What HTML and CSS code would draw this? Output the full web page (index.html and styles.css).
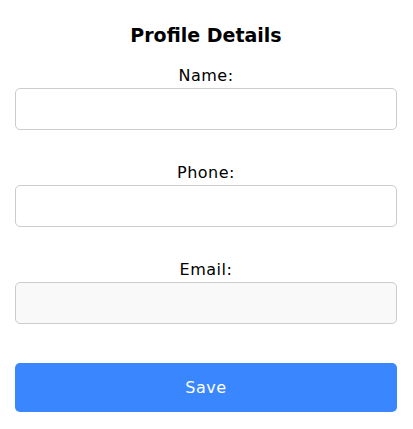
FILE: index.html
```html
<!DOCTYPE html>
<html lang="en">
<head>
<meta charset="utf-8">
<title>Profile Details</title>
<link rel="stylesheet" href="styles.css">
</head>
<body>
<form class="profile">
  <h1 class="title">Profile Details</h1>
  <div class="field">
    <label class="label" for="name">Name:</label>
    <input class="input" id="name" type="text">
  </div>
  <div class="field">
    <label class="label" for="phone">Phone:</label>
    <input class="input" id="phone" type="tel">
  </div>
  <div class="field">
    <label class="label" for="email">Email:</label>
    <input class="input input-readonly" id="email" type="email" readonly>
  </div>
  <button class="save" type="button">Save</button>
</form>
</body>
</html>
```

FILE: styles.css
```css
html, body {
  margin: 0;
  padding: 0;
  background: #ffffff;
}

body {
  font-family: "DejaVu Sans", "Noto Sans", sans-serif;
  color: #000000;
}

.profile {
  display: flex;
  flex-direction: column;
  padding: 20px 16px 0 15px;
}

.title {
  margin: 0 0 14px;
  font-size: 19px;
  line-height: 30px;
  font-weight: 700;
  text-align: center;
}

.field {
  display: flex;
  flex-direction: column;
  margin-bottom: 31px;
}

.field:last-of-type {
  margin-bottom: 39px;
}

.label {
  font-size: 16px;
  line-height: 24px;
  letter-spacing: 0.5px;
  text-align: center;
  color: #000000;
}

.input {
  box-sizing: border-box;
  height: 42px;
  margin: 0;
  border: 1px solid #cccccc;
  border-radius: 5px;
  background: #ffffff;
  font: inherit;
  padding: 0 10px;
}

.input-readonly {
  background: #f9f9f9;
}

.save {
  height: 49px;
  border: none;
  border-radius: 5px;
  background: #3a86ff;
  color: #ffffff;
  font-family: inherit;
  font-size: 16px;
  letter-spacing: 0.5px;
  cursor: pointer;
}
```
